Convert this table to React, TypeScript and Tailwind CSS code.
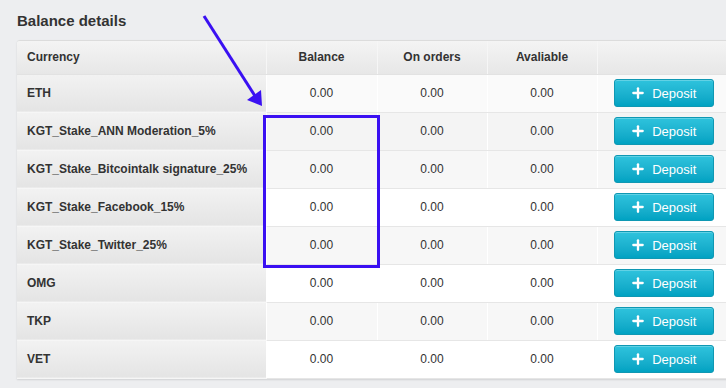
import { Plus } from "lucide-react";

type Row = { name: string; bg: string };

const rows: Row[] = [
  { name: "ETH", bg: "bg-[#fafafa]" },
  { name: "KGT_Stake_ANN Moderation_5%", bg: "bg-[#f4f4f4]" },
  { name: "KGT_Stake_Bitcointalk signature_25%", bg: "bg-[#f7f7f7]" },
  { name: "KGT_Stake_Facebook_15%", bg: "bg-white" },
  { name: "KGT_Stake_Twitter_25%", bg: "bg-[#f7f7f7]" },
  { name: "OMG", bg: "bg-white" },
  { name: "TKP", bg: "bg-[#f7f7f7]" },
  { name: "VET", bg: "bg-white" },
];

function DepositButton() {
  return (
    <button className="flex h-[28px] w-[100px] items-center justify-center gap-[6px] rounded-[3px] border border-[#0f98b3] bg-gradient-to-b from-[#2ec3dd] to-[#00a2c2] text-[13px] text-white shadow-[inset_0_1px_0_rgba(255,255,255,0.25)]">
      <Plus size={16} strokeWidth={3.5} className="-ml-[2px]" />
      <span className="leading-none">Deposit</span>
    </button>
  );
}

export default function App() {
  return (
    <div className="relative h-[388px] w-[726px] overflow-hidden bg-[#edeef0] font-['Liberation_Sans',Arial,sans-serif] text-[#333]">
      <h2 className="px-[17px] pt-[12px] text-[15px] font-bold leading-[18px]">Balance details</h2>

      <div className="ml-[17px] mt-[10px] w-[714px] overflow-hidden rounded-tl-[3px] border-t border-[#dcdcdc] shadow-[0_1px_2px_rgba(0,0,0,0.12)]">
        <table className="w-full border-collapse text-[12px]">
          <thead>
            <tr className="h-[33px] bg-gradient-to-b from-[#f4f4f4] to-[#e7e7e7] font-bold">
              <th className="w-[249px] border-b border-[#e2e2e2] pl-[10px] text-left">Currency</th>
              <th className="w-[111px] border-b border-l border-[#e2e2e2] border-l-[#f6f6f6] text-center">Balance</th>
              <th className="w-[110px] border-b border-l border-[#e2e2e2] border-l-[#f6f6f6] text-center">On orders</th>
              <th className="w-[110px] border-b border-l border-[#e2e2e2] border-l-[#f6f6f6] text-center">Avaliable</th>
              <th className="border-b border-l border-[#e2e2e2] border-l-[#f6f6f6]"></th>
            </tr>
          </thead>
          <tbody>
            {rows.map((r) => (
              <tr key={r.name} className={`h-[38px] ${r.bg}`}>
                <td className="border-b border-[#f6f6f6] bg-gradient-to-b from-[#f2f2f2] to-[#e4e4e4] pl-[10px] font-bold">
                  {r.name}
                </td>
                <td className="border-b border-l border-[#e6e6e6] border-l-white text-center">0.00</td>
                <td className="border-b border-l border-[#e6e6e6] border-l-white text-center">0.00</td>
                <td className="border-b border-l border-[#e6e6e6] border-l-white text-center">0.00</td>
                <td className="border-b border-l border-[#e6e6e6] border-l-white">
                  <div className="flex justify-center">
                    <DepositButton />
                  </div>
                </td>
              </tr>
            ))}
          </tbody>
        </table>
      </div>

      <svg className="pointer-events-none absolute left-0 top-0" width="726" height="388">
        <line x1="204" y1="16" x2="255" y2="96" stroke="#3a10f2" strokeWidth="3" />
        <polygon points="247,100 261,90 262,106" fill="#3a10f2" />
        <rect x="264.5" y="116.5" width="114" height="150" fill="none" stroke="#3a10f2" strokeWidth="3" />
      </svg>
    </div>
  );
}
